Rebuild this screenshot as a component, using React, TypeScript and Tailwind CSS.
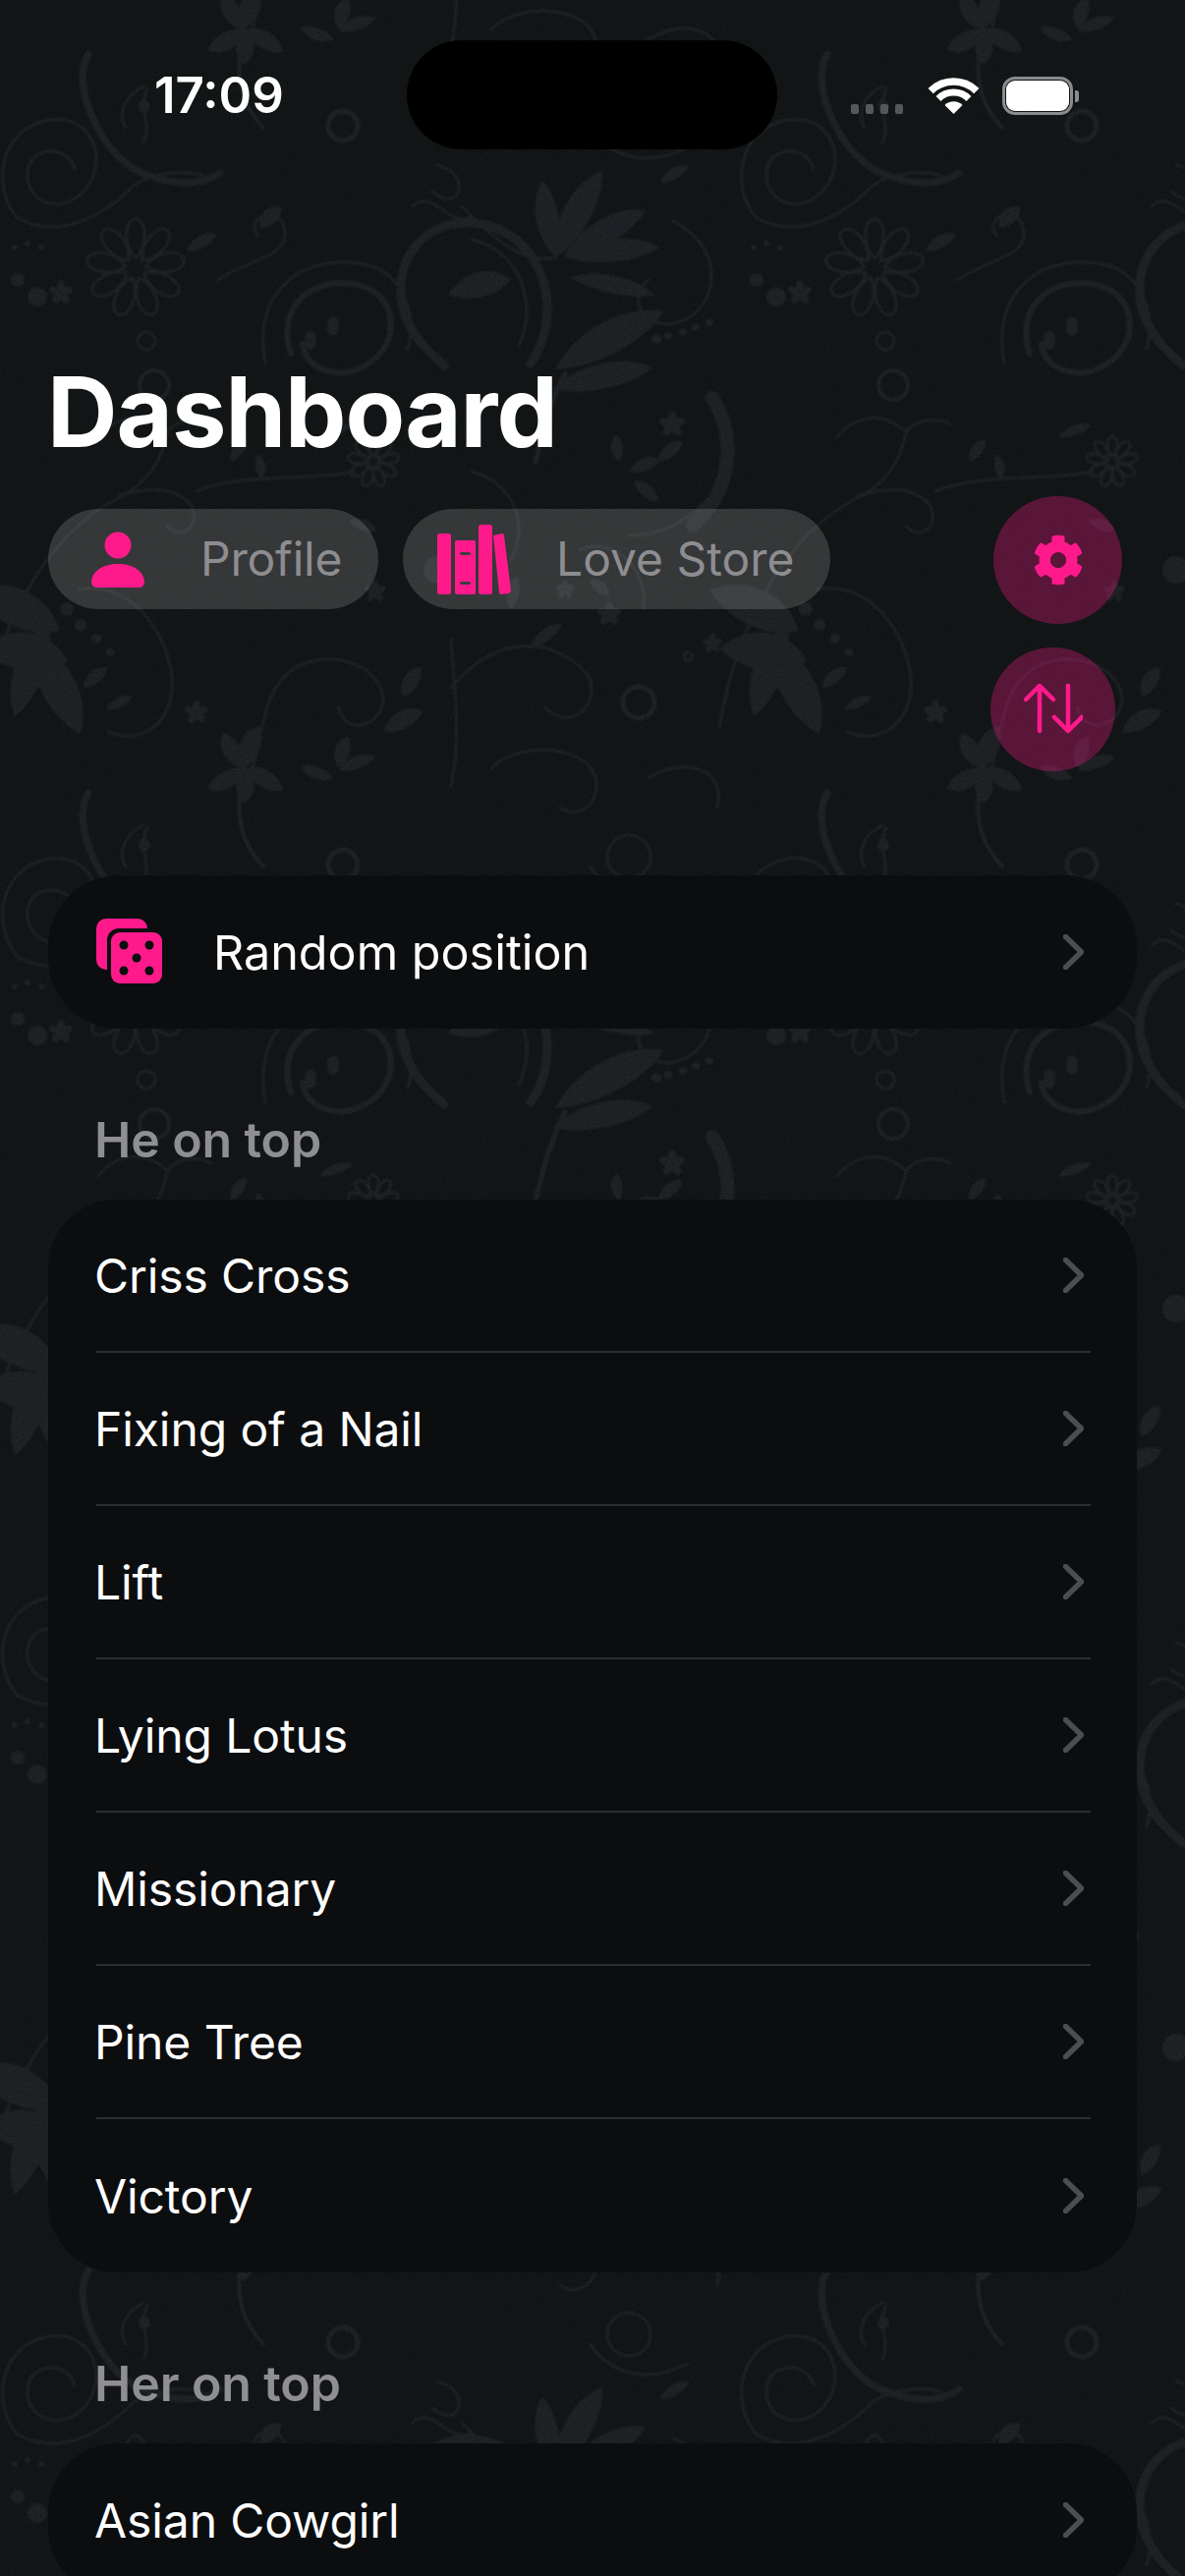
import React from 'react';
import { FaCog } from 'react-icons/fa';

const PINK = '#ff1a8c';

const hisPositions = ['Criss Cross', 'Fixing of a Nail', 'Lift', 'Lying Lotus', 'Missionary', 'Pine Tree', 'Victory'];
const herPositions = ['Asian Cowgirl'];

// small helpers for the damask wallpaper
const Flower = ({ x, y, r }: { x: number; y: number; r: number }) => (
  <g transform={`translate(${x} ${y})`} fill="none" strokeWidth="3">
    {[0, 40, 80, 120, 160, 200, 240, 280, 320].map((a) => (
      <path key={a} transform={`rotate(${a})`} d={`M0 ${-r * 0.2} C${r * 0.28} ${-r * 0.5} ${r * 0.22} ${-r} 0 ${-r} C${-r * 0.22} ${-r} ${-r * 0.28} ${-r * 0.5} 0 ${-r * 0.2}`} />
    ))}
  </g>
);

const Leaf = ({ x, y, len, w, a }: { x: number; y: number; len: number; w: number; a: number }) => (
  <path
    transform={`translate(${x} ${y}) rotate(${a})`}
    stroke="none"
    fill="#22282a"
    d={`M0 0 C${len * 0.3} ${-w} ${len * 0.75} ${-w} ${len} 0 C${len * 0.75} ${w * 0.7} ${len * 0.3} ${w * 0.7} 0 0Z`}
  />
);

const Star = ({ x, y, r }: { x: number; y: number; r: number }) => (
  <g transform={`translate(${x} ${y})`} stroke="none" fill="#22282a">
    {[0, 72, 144, 216, 288].map((a) => (
      <ellipse key={a} transform={`rotate(${a}) translate(0 ${-r * 0.6})`} rx={r * 0.36} ry={r * 0.55} />
    ))}
  </g>
);

const Motifs = () => (
  <g fill="none" stroke="#22282a" strokeLinecap="round">
    {/* spiral top left */}
    <path strokeWidth="3" d="M18 222 C-10 190 0 130 50 122 C95 116 112 165 85 195 C60 220 25 205 28 175 C30 150 68 145 76 172" />
    <path strokeWidth="3" d="M18 222 C60 245 105 220 135 190 C150 178 180 172 205 178" />
    <path strokeWidth="7" d="M90 55 C70 85 105 165 150 178 C175 188 205 190 224 176" />
    <Flower x={138} y={273} r={50} />
    <Leaf x={190} y={256} len={36} w={10} a={-30} />
    <Leaf x={265} y={232} len={30} w={12} a={-45} />
    {/* curl with leaf in the middle */}
    <path strokeWidth="9" d="M540 370 C575 320 555 240 490 228 C430 218 395 270 412 320 C425 352 440 360 452 372" />
    <path strokeWidth="3" d="M528 352 C548 310 530 255 480 244" />
    <Leaf x={456} y={300} len={66} w={20} a={-14} />
    <path strokeWidth="3" d="M420 210 C440 190 460 235 480 220 M440 195 C470 220 480 175 445 168" />
    {/* lotus */}
    <Leaf x={566} y={262} len={80} w={18} a={-100} />
    <Leaf x={566} y={262} len={100} w={22} a={-62} />
    <Leaf x={574} y={262} len={96} w={20} a={-30} />
    <Leaf x={576} y={262} len={96} w={18} a={-6} />
    <Leaf x={580} y={282} len={88} w={14} a={12} />
    <path strokeWidth="3" d="M470 210 C500 240 530 270 566 262" />
    {/* long sweep leaves */}
    <Leaf x={565} y={376} len={125} w={26} a={-28} />
    <Leaf x={562} y={396} len={105} w={20} a={-12} />
    <path strokeWidth="5" d="M545 470 C555 430 560 410 575 380" />
    <path strokeWidth="3" d="M685 225 C745 255 730 325 680 330 C650 330 640 300 660 285" />
    {/* dropped swirl */}
    <path strokeWidth="6" d="M296 360 C280 310 320 280 365 290 C405 300 410 350 372 372 C345 388 310 376 308 350" />
    <path strokeWidth="3" d="M270 370 C255 295 310 255 375 270 C410 280 425 320 415 355" />
    <path strokeWidth="11" d="M316 342 L316 350 M339 328 L339 336" />
    <path strokeWidth="3" d="M222 285 C255 262 300 262 288 228 C280 210 250 220 262 240" />
    <circle cx="349" cy="128" r="15" strokeWidth="5" />
    <circle cx="149" cy="347" r="9" strokeWidth="3" />
    <circle cx="157" cy="392" r="15" strokeWidth="4" />
    {/* beads */}
    <g stroke="none" fill="#22282a">
      <circle cx="15" cy="252" r="3" /><circle cx="28" cy="248" r="3" /><circle cx="42" cy="252" r="3" />
      <circle cx="18" cy="285" r="7" /><circle cx="38" cy="302" r="10" />
      <circle cx="668" cy="345" r="5" /><circle cx="680" cy="342" r="4" /><circle cx="695" cy="338" r="4" /><circle cx="708" cy="333" r="4" /><circle cx="722" cy="328" r="4" />
      <circle cx="68" cy="620" r="7" /><circle cx="82" cy="636" r="6" /><circle cx="98" cy="650" r="5" /><circle cx="112" cy="664" r="4" />
    </g>
    <Star x={62} y={298} r={11} />
    {/* heavy stroke right side */}
    <path strokeWidth="14" d="M725 405 C750 445 745 500 705 535" />
    <path strokeWidth="3" d="M640 545 C690 545 730 510 745 465" />
    <Leaf x={640} y={480} len={34} w={10} a={-20} />
    <Leaf x={645} y={490} len={32} w={10} a={40} />
    <Leaf x={630} y={470} len={28} w={9} a={-95} />
    <Leaf x={670} y={470} len={32} w={10} a={-40} />
    <Star x={684} y={432} r={12} />
    {/* vine with heart */}
    <path strokeWidth="3" d="M-20 740 C5 600 70 530 125 505 C150 490 165 470 170 440 C180 425 205 425 215 432 M170 440 C150 420 120 420 100 445" />
    <path strokeWidth="3" d="M120 505 C150 495 180 495 195 515 C205 540 180 550 170 535" />
    <path strokeWidth="3" d="M200 500 C250 480 320 490 360 480" />
    <Leaf x={235} y={470} len={28} w={9} a={-55} />
    <Leaf x={262} y={462} len={26} w={8} a={80} />
    <Leaf x={325} y={445} len={36} w={8} a={-20} />
    <Flower x={380} y={470} r={26} />
    <Leaf x={355} y={530} len={30} w={9} a={20} />
    <circle cx="445" cy="580" r="14" stroke="none" fill="#22282a" />
    <Star x={382} y={602} r={10} />
    {/* big leaf clump */}
    <Leaf x={-30} y={600} len={100} w={30} a={25} />
    <Leaf x={15} y={730} len={100} w={24} a={-70} />
    <Leaf x={-20} y={660} len={90} w={30} a={8} />
    <Leaf x={30} y={650} len={110} w={28} a={62} />
    <path strokeWidth="3" d="M80 600 C130 590 170 640 175 690 C178 730 150 760 110 745" />
    <Leaf x={85} y={700} len={32} w={10} a={-40} />
    <Leaf x={108} y={722} len={30} w={8} a={-25} />
    <circle cx="650" cy="715" r="16" strokeWidth="5" />
    <circle cx="700" cy="668" r="4" strokeWidth="3" />
    <Star x={200} y={725} r={11} />
    {/* lower vines */}
    <path strokeWidth="3" d="M255 790 C270 730 270 700 300 680 C335 660 385 675 390 710 C390 740 350 750 345 720" />
    <path strokeWidth="3" d="M459 650 C462 700 470 750 459 800 M459 700 C510 640 570 650 600 690 C610 720 580 745 555 720" />
    <Leaf x={390} y={745} len={46} w={14} a={-28} />
    <Leaf x={410} y={710} len={36} w={12} a={-60} />
    <Leaf x={540} y={660} len={40} w={10} a={-38} />
    <Leaf x={520} y={620} len={34} w={10} a={-80} />
    <Star x={620} y={625} r={11} />
    <Star x={725} y={655} r={9} />
    {/* star leaf near the top edge */}
    <Leaf x={248} y={30} len={46} w={16} a={-70} />
    <Leaf x={248} y={30} len={42} w={14} a={-120} />
    <Leaf x={248} y={30} len={46} w={14} a={30} />
    <Leaf x={248} y={30} len={42} w={14} a={150} />
    <Leaf x={248} y={30} len={36} w={14} a={90} />
    <path strokeWidth="4" d="M248 30 C240 70 240 100 268 130" />
    <Leaf x={340} y={40} len={36} w={10} a={-160} />
    <Leaf x={345} y={32} len={40} w={10} a={-20} />
    <Leaf x={345} y={30} len={34} w={12} a={-75} />
    <path strokeWidth="3" d="M150 90 C140 110 155 128 146 145 M146 88 C125 98 120 118 128 130" />
    <Leaf x={146} y={100} len={16} w={9} a={90} />
    <path strokeWidth="3" d="M500 30 C520 10 560 5 590 20 C625 40 600 90 570 70 M660 40 C690 20 740 25 730 70" />
    <circle cx="640" cy="120" r="22" strokeWidth="3" />
    <path strokeWidth="3" d="M600 130 C630 170 670 165 700 150" />
    <Leaf x={672} y={186} len={34} w={9} a={-30} />
    <Star x={575} y={600} r={9} />
    <path strokeWidth="3" d="M480 480 C520 490 540 530 520 570 M590 560 C620 545 660 575 655 620" />
    <Leaf x={600} y={590} len={26} w={9} a={40} />
  </g>
);

const Wallpaper = () => (
  <svg className="absolute inset-0" width="1206" height="2622">
    <defs>
      <filter id="soft" filterUnits="userSpaceOnUse" x="0" y="0" width="752" height="752">
        <feGaussianBlur stdDeviation="0.9" />
      </filter>
      <pattern id="damask" width="752" height="752" patternUnits="userSpaceOnUse" x="0" y="0">
        <rect width="752" height="752" fill="#151819" />
        <g filter="url(#soft)">
          {[-752, 0, 752].map((dx) =>
            [-752, 0, 752].map((dy) => (
              <g key={`${dx}${dy}`} transform={`translate(${dx} ${dy})`}>
                <Motifs />
              </g>
            ))
          )}
        </g>
      </pattern>
      <filter id="grain" x="0" y="0" width="100%" height="100%">
        <feTurbulence type="fractalNoise" baseFrequency="0.9" numOctaves="2" seed="3" />
        <feColorMatrix values="0 0 0 0 0  0 0 0 0 0  0 0 0 0 0  0 0 0 0.7 -0.22" />
      </filter>
    </defs>
    <rect width="1206" height="2622" fill="url(#damask)" />
    <rect width="1206" height="2622" filter="url(#grain)" />
  </svg>
);

const Chevron = () => (
  <svg width="21" height="36" viewBox="0 0 21 36" fill="none" stroke="#4c4d51" strokeWidth="5.5" strokeLinecap="round" strokeLinejoin="round">
    <path d="M2.5 2.5 L18.5 18 L2.5 33.5" />
  </svg>
);

const PersonIcon = () => (
  <svg width="54" height="57" viewBox="0 0 54 57" fill={PINK}>
    <circle cx="27" cy="14" r="13.5" />
    <path d="M0 51 C1 40 12 33 27 33 C42 33 53 40 54 51 C54 54 52 57 49 57 L5 57 C2 57 0 54 0 51Z" />
  </svg>
);

const BooksIcon = () => (
  <svg width="75" height="71" viewBox="0 0 75 71" fill={PINK}>
    <rect x="0" y="9" width="14" height="62" rx="2.5" />
    <path d="M18 18 Q18 16 20 16 L37 16 Q39 16 39 18 L39 69 Q39 71 37 71 L20 71 Q18 71 18 69Z" />
    <rect x="42" y="0" width="14" height="71" rx="2.5" />
    <path d="M57 11 L66 9 Q68 9 68 11 L75 67 Q75 69 73 70 L65 71 Q63 71 63 69Z" />
    <rect x="23" y="28" width="11" height="3" rx="1.5" fill="#3b3d40" />
    <rect x="23" y="58" width="11" height="3" rx="1.5" fill="#3b3d40" />
  </svg>
);

const DiceIcon = () => (
  <svg width="68" height="68" viewBox="0 0 68 68" className="shrink-0">
    <rect x="0" y="0" width="52" height="52" rx="10" fill={PINK} />
    <rect x="11" y="10" width="57" height="58" rx="12" fill="#0b0d0f" />
    <rect x="15" y="14" width="52" height="52" rx="9" fill={PINK} />
    <g fill="#0b0d0f">
      <circle cx="28" cy="27" r="4.5" />
      <circle cx="54" cy="27" r="4.5" />
      <circle cx="41" cy="40" r="4.5" />
      <circle cx="28" cy="53" r="4.5" />
      <circle cx="54" cy="53" r="4.5" />
    </g>
  </svg>
);

const SwapIcon = () => (
  <svg width="60" height="52" viewBox="0 0 60 52" fill="none" stroke={PINK} strokeWidth="4.5" strokeLinecap="round" strokeLinejoin="round">
    <path d="M16 2 V48 M2 16 L16 2 L30 16" />
    <path d="M45 2 V48 M31 34 L45 48 L59 34" />
  </svg>
);

const WifiIcon = () => (
  <svg width="51" height="37" viewBox="0 0 51 37" fill="none" stroke="#fff">
    <path strokeWidth="7.5" d="M2.2 13.7 A33 33 0 0 1 48.8 13.7" />
    <path strokeWidth="7" d="M10 21.5 A22 22 0 0 1 41 21.5" />
    <path stroke="none" fill="#fff" d="M25.5 37 L16.5 28 A12.7 12.7 0 0 1 34.5 28Z" />
  </svg>
);

const Row = ({ label, last }: { label: string; last?: boolean }) => (
  <div className={`h-[156px] flex items-center justify-between pr-[7px] ${last ? '' : 'border-b-2 border-[#2c2e31]'}`}>
    <span className="text-[48px] leading-[58px] pt-[2px] text-white -ml-[2px] -tracking-[0.1px]">{label}</span>
    <Chevron />
  </div>
);

const Section = ({ title, items }: { title: string; items: string[] }) => (
  <div>
    <div className="h-[174px] pl-[47px] pb-[32px] flex items-end">
      <span className="text-[50px] leading-[58px] font-semibold text-[#8e8e93] -tracking-[0.1px]">{title}</span>
    </div>
    <div className="bg-[#0b0d0f] rounded-[70px] pl-[49px] pr-[47px]">
      {items.map((item, i) => (
        <Row key={item} label={item} last={i === items.length - 1} />
      ))}
    </div>
  </div>
);

export default function App() {
  return (
    <div className="relative w-[1206px] h-[2622px] overflow-hidden bg-[#151819]" style={{ fontFamily: 'Inter, sans-serif' }}>
      <Wallpaper />

      <div className="relative">
        {/* status bar */}
        <div className="h-[152px] pt-[41px] flex">
          <div className="w-[414px] pl-[157px] pt-[28px]">
            <span className="text-[51px] leading-[56px] font-semibold text-white">17:09</span>
          </div>
          <div className="w-[377px] h-[111px] rounded-[56px] bg-black" />
          <div className="flex-1 pl-[75px] pt-[37px] flex items-start">
            <div className="flex gap-[7px] mt-[28px]">
              <div className="w-[8px] h-[10px] rounded-[2px] bg-[#555759]" />
              <div className="w-[8px] h-[10px] rounded-[2px] bg-[#555759]" />
              <div className="w-[8px] h-[10px] rounded-[2px] bg-[#555759]" />
              <div className="w-[8px] h-[10px] rounded-[2px] bg-[#555759]" />
            </div>
            <div className="ml-[26px] mt-[1px]">
              <WifiIcon />
            </div>
            <div className="ml-[24px] flex items-center">
              <div className="w-[72px] h-[39px] rounded-[13px] border-[3px] border-[#8a8b8c] p-[1px]">
                <div className="w-full h-full bg-white rounded-[9px]" />
              </div>
              <div className="w-[4px] h-[12px] rounded-r-[3px] bg-[#8a8b8c] ml-[2px]" />
            </div>
          </div>
        </div>

        {/* title */}
        <h1 className="pl-[48px] mt-[207px] text-[99px] leading-[120px] font-bold text-white tracking-[-1px]">Dashboard</h1>

        {/* pills and round buttons */}
        <div className="flex justify-between items-start pl-[49px] pr-[64px] mt-[26px]">
          <div className="flex gap-[25px] mt-[13px]">
            <div className="h-[102px] w-[336px] rounded-[51px] bg-white/15 flex items-center pl-[44px]">
              <PersonIcon />
              <span className="ml-[57px] text-[48px] text-[#8d8d91] -tracking-[0.2px]">Profile</span>
            </div>
            <div className="h-[102px] w-[435px] rounded-[51px] bg-white/15 flex items-center pl-[35px]">
              <BooksIcon />
              <span className="ml-[46px] text-[48px] text-[#8d8d91]">Love Store</span>
            </div>
          </div>
          <div className="flex flex-col items-end gap-[24px]">
            <div className="w-[131px] h-[130px] rounded-full bg-[#ff1a8c]/30 flex items-center justify-center">
              <FaCog size={52} color={PINK} />
            </div>
            <div className="w-[127px] h-[126px] rounded-full bg-[#ff1a8c]/30 flex items-center justify-center mr-[7px]">
              <SwapIcon />
            </div>
          </div>
        </div>

        {/* content */}
        <div className="px-[49px] mt-[106px]">
          <div className="h-[156px] rounded-[72px] bg-[#0b0d0f] flex items-center pl-[49px] pr-[54px]">
            <DiceIcon />
            <span className="ml-[51px] text-[48.5px] leading-[58px] pt-[2px] text-white">Random position</span>
            <div className="ml-auto flex">
              <Chevron />
            </div>
          </div>
          <Section title="He on top" items={hisPositions} />
          <Section title="Her on top" items={herPositions} />
        </div>
      </div>
    </div>
  );
}
